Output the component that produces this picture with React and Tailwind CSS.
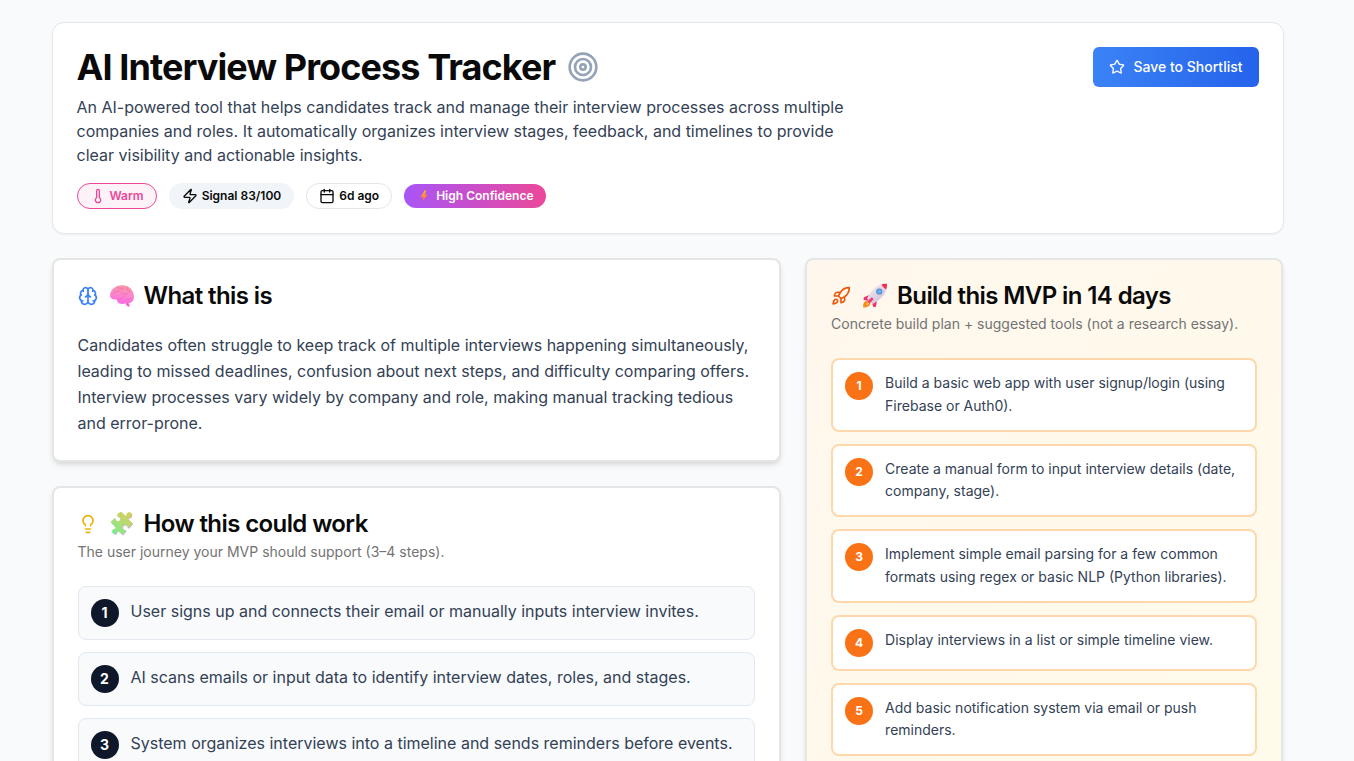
import {
  Brain,
  Calendar,
  Lightbulb,
  Rocket,
  Star,
  Target,
  Thermometer,
  Zap,
} from "lucide-react";

const journeySteps = [
  "User signs up and connects their email or manually inputs interview invites.",
  "AI scans emails or input data to identify interview dates, roles, and stages.",
  "System organizes interviews into a timeline and sends reminders before events.",
];

const buildSteps = [
  "Build a basic web app with user signup/login (using Firebase or Auth0).",
  "Create a manual form to input interview details (date, company, stage).",
  "Implement simple email parsing for a few common formats using regex or basic NLP (Python libraries).",
  "Display interviews in a list or simple timeline view.",
  "Add basic notification system via email or push reminders.",
];

function BrainEmoji() {
  return (
    <svg viewBox="0 0 32 32" className="h-8 w-8 shrink-0" aria-hidden="true">
      <defs>
        <linearGradient id="brain-fill" x1="0.6" y1="0" x2="0.4" y2="1">
          <stop offset="0" stopColor="#f796a4" />
          <stop offset="0.5" stopColor="#fc86cc" />
          <stop offset="1" stopColor="#ff66e6" />
        </linearGradient>
      </defs>
      <path
        d="M20 22.200l3 1.200.6 3.200c-1.900.3-3.400-1-3.800-2.800z"
        fill="#f562c4"
      />
      <path
        d="M4 15.500C4.200 9.500 9.500 5.300 15.800 5.200 22.500 5 27.800 9.500 28 16.500c.1 3.300-1.600 6-4.300 6.600-1.300.3-2.400.2-3.500-.1-2.600 1.500-7.200 1.300-8.700-1.200-.5-.8-.6-1.700-.5-2.500C7.500 20.200 4 18.800 4 15.500z"
        fill="url(#brain-fill)"
      />
      <path
        d="M7.500 14c1-2.500 3-3.500 5.500-3M12 7.500c1.500 1.500 3.500 2 5.500 1.200M11 19.300c3 .2 5.500-.6 7-2.800M15 13c2 1.800 4.500 2 6.500.5M21 7.500c-.2 2.200.8 3.600 2.800 4.300M20.500 19.500c1.800.6 3.500.2 5-1.300"
        fill="none"
        stroke="#dd5f98"
        strokeWidth="0.5"
        strokeLinecap="round"
      />
    </svg>
  );
}

const puzzlePath =
  "M12.2 5.300l3-1.500 4.300 4.100c1-.2 1-1 1.200-1.900.6-2.100 3.600-2.200 4.700-.4 1.200 1.900-.1 4-2 4.300-1 .1-1.700.5-1.300 1.300l4.700 4.300-4 4.300c-1 .3-1.300-.3-1.500-1.200-.5-2-2.900-2.300-4.100-.9-1.300 1.500-.5 3.700 1.500 4 .9.200 1.700.5 1.300 1.300L16.500 27l-4.300-4.100c-.9-.1-1.200.6-1.300 1.500-.4 2-3.200 2.300-4.300.6-1.200-1.700-.1-3.800 1.700-4.200.9-.2 1.500-.5 1.300-1.400L4.500 14l3.600-3.600c.9-.3 1.300.3 1.500 1.200.5 1.900 2.700 2.200 4 .9 1.300-1.500.5-3.400-1.300-3.900-1.100-.3-1.700-.9-1.100-1.600z";

function PuzzleEmoji() {
  return (
    <svg viewBox="0 0 32 32" className="h-8 w-8 shrink-0" aria-hidden="true">
      <defs>
        <linearGradient id="puzzle-fill" x1="0.8" y1="0.1" x2="0.2" y2="0.9">
          <stop offset="0" stopColor="#d3cf58" />
          <stop offset="0.5" stopColor="#b0dc76" />
          <stop offset="1" stopColor="#7eec8c" />
        </linearGradient>
      </defs>
      <path d={puzzlePath} fill="#cda6e4" transform="translate(.5 .6)" />
      <path d={puzzlePath} fill="url(#puzzle-fill)" />
    </svg>
  );
}

function RocketEmoji() {
  return (
    <svg viewBox="0 0 32 32" className="h-8 w-8 shrink-0" aria-hidden="true">
      <defs>
        <linearGradient id="rocket-body" x1="0.2" y1="0.1" x2="0.8" y2="0.9">
          <stop offset="0" stopColor="#efe8f0" />
          <stop offset="1" stopColor="#cfc0da" />
        </linearGradient>
      </defs>
      <path
        d="M8.500 20.500l3 3c-.6 2.500-3 3.900-7.300 3.900-.3-3.700.8-6.300 4.300-6.900z"
        fill="#f58a1f"
      />
      <path
        d="M8.800 22l1.500 1.500c-.6 1.300-1.700 1.900-3.300 2 .1-1.700.5-2.900 1.800-3.500z"
        fill="#fdb338"
      />
      <path
        d="M11.500 14.500l-6 2.500c-1 .8-1.100 1.900-.8 3l5 .6zM18 20.500l-1.100 6.200c-1 .6-2 .3-2.900-.1l-1-5z"
        fill="#f22e6c"
      />
      <path
        d="M19.500 5.500c2.800-1.500 5.300-2 8.400-1.700.4 3.100-.1 5.800-1.600 8.500-2.300 4.300-6.500 8.400-12.700 11.800l-5.600-5.600C10.800 12.500 15 8 19.500 5.500z"
        fill="url(#rocket-body)"
      />
      <path
        d="M22.500 4.300c1.800-.6 3.500-.7 5.400-.5.200 1.900 0 3.700-.7 5.500-2-.9-3.700-2.600-4.700-5z"
        fill="#f22e4e"
      />
      <path d="M12.800 17.300l1.800 1.800-3.900 4.400-2.200-2.200z" fill="#f03a78" />
      <circle cx="20.300" cy="11.500" r="3.100" fill="#5b7dbb" />
      <circle cx="20.300" cy="11.500" r="2.300" fill="#5db2f8" />
    </svg>
  );
}

function BoltEmoji() {
  return (
    <svg viewBox="0 0 16 16" className="h-4 w-4 shrink-0" aria-hidden="true">
      <defs>
        <linearGradient id="bolt-fill" x1="0" y1="0" x2="0" y2="1">
          <stop offset="0" stopColor="#ffb02e" />
          <stop offset="1" stopColor="#f9644f" />
        </linearGradient>
      </defs>
      <path
        d="M8.800 2.200L4.800 8.300c-.2.300 0 .6.300.6h2L6.200 13.600l5-6.300c.2-.3.100-.6-.3-.6H9l1.300-4c.1-.3 0-.5-.4-.5z"
        fill="url(#bolt-fill)"
      />
    </svg>
  );
}

function Card({ className = "bg-white", icon, emoji, title, subtitle, children }) {
  return (
    <section
      className={`rounded-lg border-2 border-neutral-200 p-6 shadow-md ${className}`}
    >
      <div className="mb-6 space-y-1.5">
        <h2 className="flex h-6 items-center gap-1.5 text-2xl leading-6 font-semibold tracking-tight">
          <span className="flex items-center gap-2">
            {icon}
            {emoji}
          </span>
          {title}
        </h2>
        {subtitle && <p className="text-sm text-neutral-500">{subtitle}</p>}
      </div>
      {children}
    </section>
  );
}

export default function App() {
  return (
    <div className="min-h-screen bg-slate-50 pr-[19px] font-['Inter',sans-serif] text-neutral-950">
      <main className="mx-auto max-w-7xl space-y-6 px-6 pt-[22px] pb-8">
        <header className="flex items-start justify-between gap-4 rounded-xl border border-slate-200 bg-white p-6 shadow-xs">
          <div>
            <h1 className="mb-2 flex items-center gap-3 text-4xl font-bold tracking-tight">
              AI Interview Process Tracker
              <Target className="h-8 w-8 text-[#94a3b8]" />
            </h1>
            <p className="max-w-3xl text-[#334155]">
              An AI-powered tool that helps candidates track and manage their
              interview processes across multiple companies and roles. It
              automatically organizes interview stages, feedback, and timelines
              to provide clear visibility and actionable insights.
            </p>
            <div className="mt-4 flex flex-wrap items-center gap-3 text-xs font-semibold">
              <span className="flex items-center gap-1 rounded-full border border-[#ec4899] bg-pink-50 px-3 py-1 text-[#ec4899]">
                <Thermometer className="h-4 w-4" />
                Warm
              </span>
              <span className="flex items-center gap-1 rounded-full border border-transparent bg-slate-100 px-3 py-1">
                <Zap className="h-4 w-4" />
                Signal 83/100
              </span>
              <span className="flex items-center gap-1 rounded-full border border-neutral-200 px-3 py-1">
                <Calendar className="h-4 w-4" />
                6d ago
              </span>
              <span className="flex items-center gap-1 rounded-full bg-linear-to-r/srgb from-[#a855f7] to-[#ec4899] px-3 py-1 text-white">
                <BoltEmoji />
                High Confidence
              </span>
            </div>
          </div>
          <button
            type="button"
            className="flex h-10 shrink-0 items-center gap-2 rounded-md bg-linear-to-r/srgb from-[#3b82f6] to-[#2563eb] px-4 text-sm font-medium text-white"
          >
            <Star className="h-4 w-4" />
            Save to Shortlist
          </button>
        </header>

        <div className="grid gap-6 lg:grid-cols-5">
          <div className="space-y-6 lg:col-span-3">
            <Card
              icon={<Brain className="h-5 w-5 text-[#3b82f6]" />}
              emoji={<BrainEmoji />}
              title="What this is"
            >
              <p className="leading-relaxed text-[#334155]">
                Candidates often struggle to keep track of multiple interviews
                happening simultaneously, leading to missed deadlines, confusion
                about next steps, and difficulty comparing offers. Interview
                processes vary widely by company and role, making manual
                tracking tedious and error-prone.
              </p>
            </Card>

            <Card
              icon={<Lightbulb className="h-5 w-5 text-[#eab308]" />}
              emoji={<PuzzleEmoji />}
              title="How this could work"
              subtitle="The user journey your MVP should support (3–4 steps)."
            >
              <ol className="space-y-3">
                {journeySteps.map((step, index) => (
                  <li
                    key={index}
                    className="flex items-start gap-3 rounded-lg border border-slate-200 bg-slate-50 p-3"
                  >
                    <span className="flex h-7 w-7 shrink-0 items-center justify-center rounded-full bg-slate-900 text-sm font-bold text-white">
                      {index + 1}
                    </span>
                    <p className="text-[#334155]">{step}</p>
                  </li>
                ))}
              </ol>
            </Card>
          </div>

          <div className="lg:col-span-2">
            <Card
              className="bg-linear-to-br/srgb from-[#fff7ed] to-[#fffbeb]"
              icon={<Rocket className="h-5 w-5 text-[#ea580c]" />}
              emoji={<RocketEmoji />}
              title="Build this MVP in 14 days"
              subtitle="Concrete build plan + suggested tools (not a research essay)."
            >
              <ol className="space-y-3">
                {buildSteps.map((step, index) => (
                  <li
                    key={index}
                    className="flex items-start gap-3 rounded-lg border-2 border-[#fed7aa] bg-white p-3"
                  >
                    <span className="flex h-7 w-7 shrink-0 items-center justify-center rounded-full bg-[#f97316] text-xs font-bold text-white">
                      {index + 1}
                    </span>
                    <p className="text-sm leading-relaxed text-[#334155]">
                      {step}
                    </p>
                  </li>
                ))}
              </ol>
            </Card>
          </div>
        </div>
      </main>
    </div>
  );
}
